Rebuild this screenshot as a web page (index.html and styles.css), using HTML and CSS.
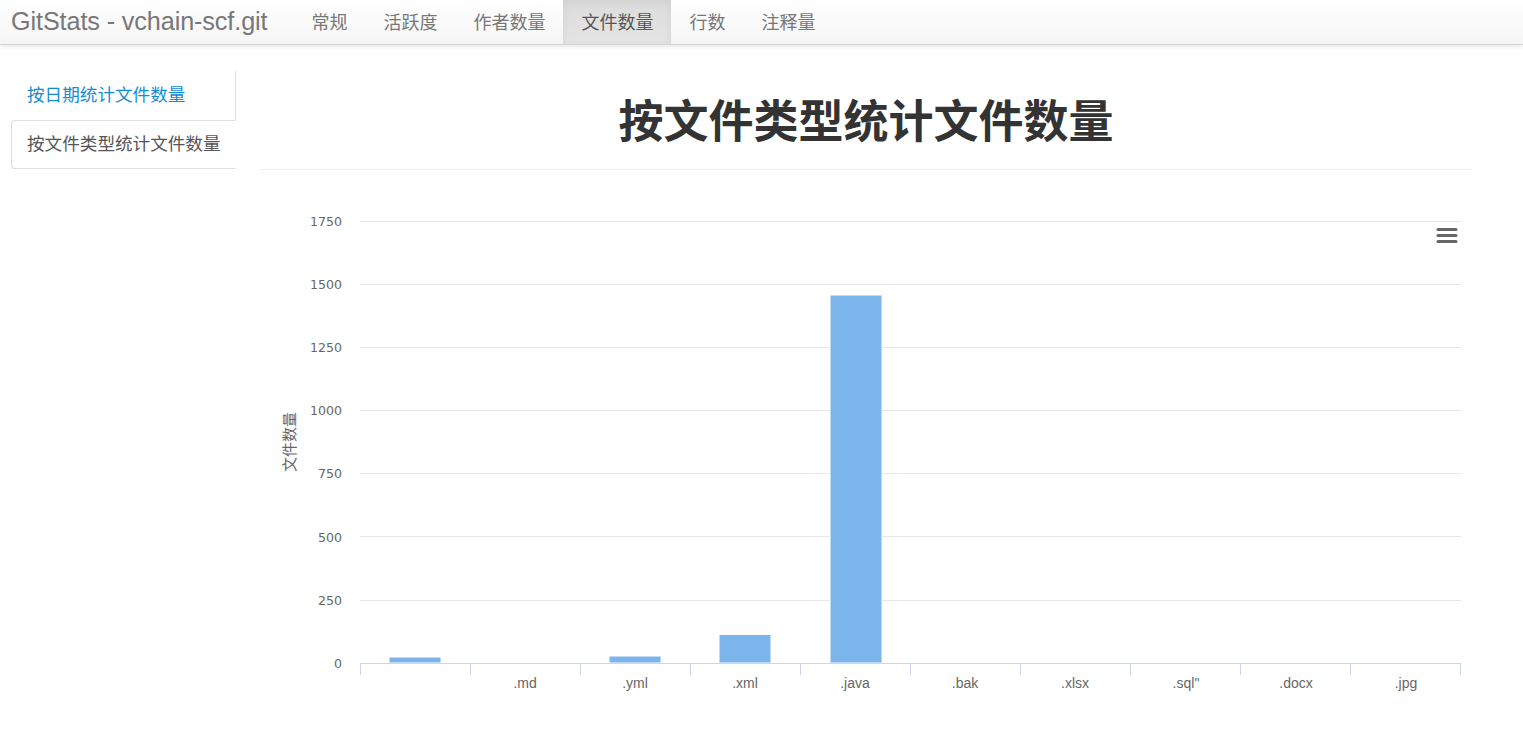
FILE: index.html
```html
<!DOCTYPE html>
<html lang="zh-CN">
<head>
  <meta charset="UTF-8" />
  <meta name="viewport" content="width=device-width, initial-scale=1.0" />
  <title>GitStats - vchain-scf.git</title>
  <link rel="stylesheet" href="styles.css">
</head>
<body>
  <nav class="navbar">
    <a class="brand" href="#">GitStats - vchain-scf.git</a>
    <ul class="nav">
      <li><a href="#">常规</a></li>
      <li><a href="#">活跃度</a></li>
      <li><a href="#">作者数量</a></li>
      <li class="active"><a href="#">文件数量</a></li>
      <li><a href="#">行数</a></li>
      <li><a href="#">注释量</a></li>
    </ul>
  </nav>

  <div class="layout">
    <ul class="side-tabs">
      <li><a href="#">按日期统计文件数量</a></li>
      <li class="active"><a href="#">按文件类型统计文件数量</a></li>
    </ul>

    <div class="main">
      <div class="page-header">
        <h1>按文件类型统计文件数量</h1>
      </div>

      <div class="chart">
        <svg width="1212" height="530" viewBox="0 0 1212 530">
          <g class="grid">
            <line x1="100" y1="51.5" x2="1201" y2="51.5" />
            <line x1="100" y1="114.5" x2="1201" y2="114.5" />
            <line x1="100" y1="177.5" x2="1201" y2="177.5" />
            <line x1="100" y1="240.5" x2="1201" y2="240.5" />
            <line x1="100" y1="303.5" x2="1201" y2="303.5" />
            <line x1="100" y1="366.5" x2="1201" y2="366.5" />
            <line x1="100" y1="430.5" x2="1201" y2="430.5" />
          </g>

          <g class="y-labels">
            <text x="82" y="56">1750</text>
            <text x="82" y="119">1500</text>
            <text x="82" y="182">1250</text>
            <text x="82" y="245">1000</text>
            <text x="82" y="308">750</text>
            <text x="82" y="372">500</text>
            <text x="82" y="435">250</text>
            <text x="82" y="498">0</text>
          </g>

          <text class="y-title" transform="translate(35 272) rotate(-90)">文件数量</text>

          <g class="bars">
            <rect x="129" y="487" width="52" height="6" />
            <rect x="349" y="486" width="52" height="7" />
            <rect x="459" y="464.5" width="52" height="28.5" />
            <rect x="570" y="125" width="52" height="368" />
          </g>

          <g class="axis">
            <line x1="100" y1="493.5" x2="1201" y2="493.5" />
            <line x1="100.5" y1="493" x2="100.5" y2="505" />
            <line x1="210.5" y1="493" x2="210.5" y2="505" />
            <line x1="320.5" y1="493" x2="320.5" y2="505" />
            <line x1="430.5" y1="493" x2="430.5" y2="505" />
            <line x1="540.5" y1="493" x2="540.5" y2="505" />
            <line x1="650.5" y1="493" x2="650.5" y2="505" />
            <line x1="760.5" y1="493" x2="760.5" y2="505" />
            <line x1="870.5" y1="493" x2="870.5" y2="505" />
            <line x1="980.5" y1="493" x2="980.5" y2="505" />
            <line x1="1090.5" y1="493" x2="1090.5" y2="505" />
            <line x1="1200.5" y1="493" x2="1200.5" y2="505" />
          </g>

          <g class="x-labels">
            <text x="265" y="518">.md</text>
            <text x="375" y="518">.yml</text>
            <text x="485" y="518">.xml</text>
            <text x="595" y="518">.java</text>
            <text x="705" y="518">.bak</text>
            <text x="815" y="518">.xlsx</text>
            <text x="926" y="518">.sql"</text>
            <text x="1036" y="518">.docx</text>
            <text x="1146" y="518">.jpg</text>
          </g>

          <g class="menu">
            <line x1="1178" y1="59.5" x2="1196" y2="59.5" />
            <line x1="1178" y1="65.5" x2="1196" y2="65.5" />
            <line x1="1178" y1="71.5" x2="1196" y2="71.5" />
          </g>
        </svg>
      </div>
    </div>
  </div>
</body>
</html>
```

FILE: styles.css
```css
body {
  margin: 0;
  font-family: "Liberation Sans", "Noto Sans CJK SC", sans-serif;
  background: #fff;
  color: #333;
}

a {
  text-decoration: none;
}

/* top bar */
.navbar {
  display: flex;
  align-items: stretch;
  height: 44px;
  background: linear-gradient(to bottom, #fff 0, #f5f5f5 100%);
  border-bottom: 1px solid #d6d6d6;
  box-shadow: 0 1px 5px rgba(0, 0, 0, 0.12);
}

.brand {
  display: flex;
  align-items: center;
  padding: 0 0 1px 11px;
  font-size: 25.2px;
  color: #777;
  letter-spacing: -0.1px;
}

.nav {
  display: flex;
  list-style: none;
  margin: 0 0 0 26px;
  padding: 0;
}

.nav li a {
  display: flex;
  align-items: center;
  height: 100%;
  box-sizing: border-box;
  padding: 0 18px 3px;
  font-size: 18px;
  color: #777;
  font-family: "Noto Sans CJK SC", sans-serif;
  text-shadow: 0 1px 0 rgba(255, 255, 255, 0.25);
}

.nav li.active a {
  color: #555;
  background: linear-gradient(to bottom, #dcdcdc 0, #e4e4e4 100%);
  box-shadow: inset 0 3px 9px rgba(0, 0, 0, 0.06);
}

/* page body */
.layout {
  display: flex;
  align-items: flex-start;
}

.side-tabs {
  list-style: none;
  width: 224px;
  margin: 26px 0 0 11px;
  padding: 0;
  border-right: 1px solid #ddd;
  font-family: "Noto Sans CJK SC", sans-serif;
  font-size: 17.6px;
}

.side-tabs li a {
  display: block;
  padding: 9px 12px 13px 15px;
  line-height: 25px;
  white-space: nowrap;
  border: 1px solid transparent;
  color: #168ccf;
}

.side-tabs li.active a {
  color: #555;
  background: #fff;
  border-color: #ddd;
  border-right-color: transparent;
  border-radius: 4px 0 0 4px;
  margin-right: -1px;
}

.main {
  width: 1212px;
  margin-left: 24px;
}

.page-header {
  margin-top: 49px;
  padding-bottom: 25px;
  border-bottom: 1px solid #eee;
  text-align: center;
}

.page-header h1 {
  margin: 0;
  font-family: "Noto Sans CJK SC", sans-serif;
  font-size: 45px;
  line-height: 50px;
  font-weight: 700;
  color: #333;
}

/* chart */
.chart svg {
  display: block;
}

.grid line {
  stroke: #e6e6e6;
  stroke-width: 1;
}

.axis line {
  stroke: #ccd6eb;
  stroke-width: 1;
}

.y-labels text {
  font-family: "DejaVu Sans", sans-serif;
  font-size: 12.6px;
  fill: #666;
  text-anchor: end;
}

.y-title {
  font-family: "Noto Sans CJK SC", sans-serif;
  font-size: 15px;
  fill: #666;
  text-anchor: middle;
}

.x-labels text {
  font-family: "Liberation Sans", sans-serif;
  font-size: 14px;
  fill: #666;
  text-anchor: middle;
}

.bars rect {
  fill: #7cb5ec;
  stroke: #fff;
  stroke-width: 1;
}

.menu line {
  stroke: #666;
  stroke-width: 3;
  stroke-linecap: round;
}
```
